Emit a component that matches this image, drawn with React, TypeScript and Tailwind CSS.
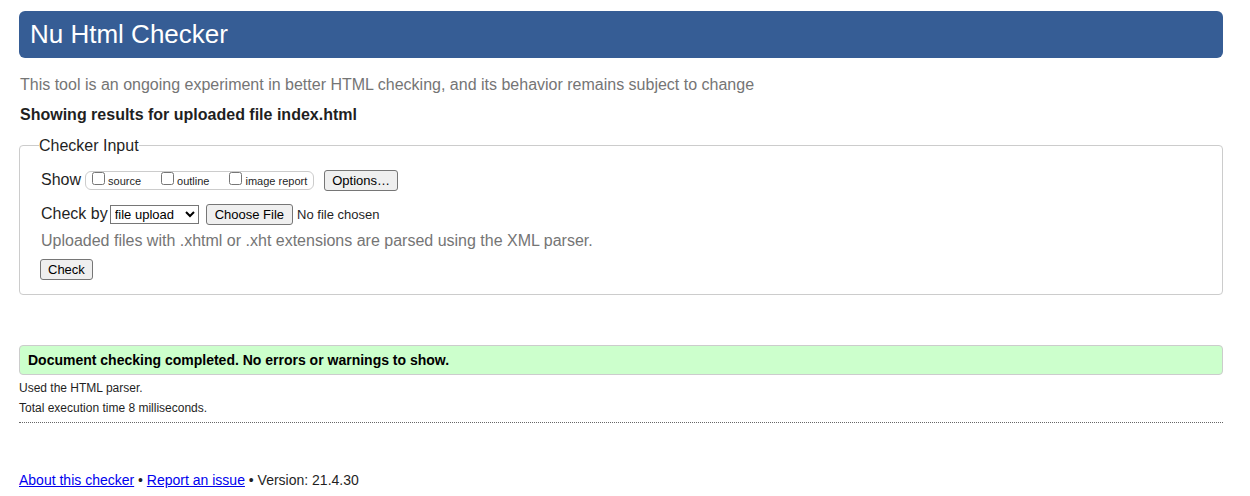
import { useState } from 'react';
import type { ReactNode } from 'react';

function PushButton({ children, submit = false }: { children: ReactNode; submit?: boolean }) {
  return (
    <button
      type={submit ? 'submit' : 'button'}
      className="h-[21px] rounded-[3px] border border-[#767676] bg-[#efefef] px-[7px] text-[13px] leading-[19px] text-black hover:bg-[#e5e5e5]"
    >
      {children}
    </button>
  );
}

function ShowOption({ id, label }: { id: string; label: string }) {
  return (
    <span className="flex items-start gap-[3px]">
      <input id={id} name={id} type="checkbox" className="size-[13px]" />
      <label htmlFor={id} className="pt-px text-[11px] leading-4">
        {label}
      </label>
    </span>
  );
}

export default function App() {
  const [method, setMethod] = useState('file');

  return (
    <div className="bg-white pt-[11px] pr-[27px] pb-1 pl-[19px] font-['Liberation_Sans',Arial,sans-serif] text-[16px] leading-5 text-[#1f1f1f]">
      <header>
        <h1 className="rounded-md bg-[#365d95] px-[11px] pb-px text-[26px] leading-[46px] text-white">Nu Html Checker</h1>
        <p className="mt-[17px] px-px text-[#757575]">
          This tool is an ongoing experiment in better HTML checking, and its behavior remains subject to change
        </p>
      </header>

      <main>
        <h2 className="mt-[10px] px-px font-bold">Showing results for uploaded file index.html</h2>

        <form onSubmit={(event) => event.preventDefault()} className="mt-[9px]">
          <fieldset className="rounded border border-[#cccccc] px-5 pb-[14px]">
            <legend className="-ml-px pt-[2px]">Checker Input</legend>

            <div className="mt-[14px] flex items-center">
              <span className="pb-px pl-px">Show</span>
              <div className="mr-[10px] ml-1 flex h-[19px] gap-5 rounded-md border border-[#cccccc] px-[6px]">
                <ShowOption id="showsource" label="source" />
                <ShowOption id="showoutline" label="outline" />
                <ShowOption id="showimagereport" label="image report" />
              </div>
              <PushButton>Options…</PushButton>
            </div>

            <div className="mt-[13px] flex items-center">
              <label htmlFor="docselect" className="pb-px pl-px">
                Check by
              </label>
              <select
                id="docselect"
                value={method}
                onChange={(event) => setMethod(event.target.value)}
                className="mr-[7px] ml-[2px] h-[19px] w-[89px] border border-[#767676] bg-white text-[13px] leading-4 text-black"
              >
                <option value="address">address</option>
                <option value="file">file upload</option>
                <option value="text">text input</option>
              </select>
              <input
                type="file"
                aria-label="File to check"
                className="h-[21px] text-[13px] leading-[21px] file:mr-1 file:h-[21px] file:rounded-[3px] file:border file:border-solid file:border-[#767676] file:bg-[#efefef] file:px-2 file:leading-[19px] file:text-black"
              />
            </div>

            <p className="mt-[6px] pl-px text-[#757575]">
              Uploaded files with .xhtml or .xht extensions are parsed using the XML parser.
            </p>
            <div className="mt-2 flex">
              <PushButton submit>Check</PushButton>
            </div>
          </fieldset>
        </form>

        <section className="mt-[50px] border-b border-dotted border-[#666666] pb-1 text-[12px]">
          <p className="mb-[3px] rounded border border-[#cccccc] bg-[#ccffcc] px-2 py-1 text-[14px] font-bold text-black">
            Document checking completed. No errors or warnings to show.
          </p>
          <p>Used the HTML parser.</p>
          <p>Total execution time 8 milliseconds.</p>
        </section>
      </main>

      <footer className="mt-[47px] text-[14px]">
        <a href="#about" className="text-[#0000ee] underline">
          About this checker
        </a>
        {' • '}
        <a href="#issues" className="text-[#0000ee] underline">
          Report an issue
        </a>
        {' • Version: 21.4.30'}
      </footer>
    </div>
  );
}
